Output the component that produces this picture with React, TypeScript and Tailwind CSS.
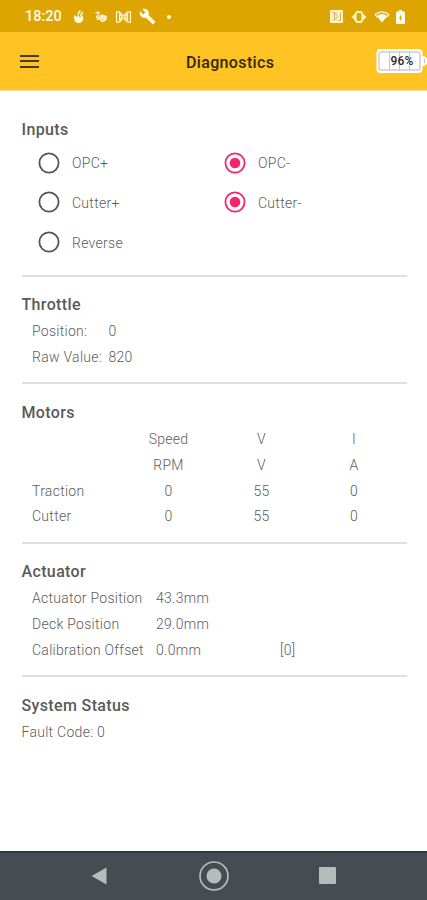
import React from "react";

function Heading({ children, className = "" }: { children: React.ReactNode; className?: string }) {
  return <h2 className={`h-[26px] text-[16px] leading-[26px] font-medium tracking-[0.36px] text-[#5a5a5a] ${className}`}>{children}</h2>;
}

function Divider({ className = "" }: { className?: string }) {
  return <div className={`h-[2px] shrink-0 bg-[#e0e0e0] ${className}`} />;
}

function Radio({ label, on = false }: { label: string; on?: boolean }) {
  return (
    <div className="flex h-[39.6px] items-center">
      <svg width="22" height="22" viewBox="0 0 22 22" fill="none">
        <circle cx="11" cy="11" r="9.6" stroke={on ? "#f5256c" : "#555555"} strokeWidth="1.8" />
        {on && <circle cx="11" cy="11" r="5.3" fill="#f5256c" />}
      </svg>
      <span className="ml-[12px] pt-[2px]">{label}</span>
    </div>
  );
}

const motors = [
  ["", "Speed", "V", "I"],
  ["", "RPM", "V", "A"],
  ["Traction", "0", "55", "0"],
  ["Cutter", "0", "55", "0"],
];

const actuator = [
  ["Actuator Position", "43.3mm", ""],
  ["Deck Position", "29.0mm", ""],
  ["Calibration Offset", "0.0mm", "[0]"],
];

export default function App() {
  return (
    <div className="flex h-[900px] w-[427px] flex-col overflow-hidden bg-white font-['Roboto',sans-serif] text-[14px] font-light tracking-[0.28px] text-[#5c5c5c]">
      <div className="flex h-[32px] shrink-0 items-center bg-[#dea500] pt-[1px] pl-[25px] text-white">
        <span className="w-[37px] pt-[1px] text-[14.5px] font-medium tracking-[0px] text-[#fffbe9]">18:20</span>
        <svg className="ml-[11px]" width="12" height="14" viewBox="0 0 12 14" fill="#fff8df">
          <path d="M1.200 5C0 9.500 2.200 13 5.700 13s5.300-3 4.300-6.500L8.800 4.800 7 7.500 5 4.500 4.400 7Z" />
          <path d="m5 4 2-3M7.800 5l1.600-2.500" stroke="#fff8df" strokeWidth="1.500" strokeLinecap="round" />
        </svg>
        <svg className="ml-[9px]" width="14" height="14" viewBox="0 0 14 14" fill="none" stroke="#fff8df" strokeWidth="1.4" strokeLinecap="round" strokeLinejoin="round">
          <path d="M2 3.2q3-2 3 0T2.500 6.500q0 2 2.500.5L8 5.200M3.500 9.500q2.200-2.500 3 0 .7 2.500 3 1.500Q12.500 10 12.200 6.500L8 5.200l-1 3.500" />
          <circle cx="9.300" cy="8" r="1.300" />
        </svg>
        <svg className="ml-[7px]" width="17" height="14" viewBox="0 0 17 14" fill="none" stroke="#fff8df" strokeWidth="1.2">
          <path d="M4.500 1.800H1.500v10.400h3M12.500 1.800h3v10.400h-3M4.500 4v6l2.700-3ZM12.500 4v6L9.800 7ZM4.500 1.800 8.500 6l4-4.200M4.500 12.200l4-4.200 4 4.200" />
        </svg>
        <svg className="ml-[7px]" width="17" height="17" viewBox="0 0 24 24" fill="#fffbe9">
          <path d="m22.7 19-9.1-9.1c.9-2.3.4-5-1.5-6.9-2-2-5-2.4-7.4-1.3L9 6 6 9 1.6 4.7C.4 7.1.9 10.1 2.9 12.1c1.9 1.9 4.6 2.4 6.9 1.5l9.1 9.1c.4.4 1 .4 1.400 0l2.300-2.300c.5-.4.5-1.100.1-1.400Z" />
        </svg>
        <span className="ml-[11px] size-[4px] rounded-full bg-[#fffbe9]" />
        <svg className="ml-[159px]" width="13" height="13" viewBox="0 0 13 13">
          <rect width="13" height="13" rx="1" fill="#fff3cc" />
          <path d="M2.500 2.500h2v7l-2 1M6 2.500v2l2 2-2 2v2M10.500 2.500v8h-2" fill="none" stroke="#d4ab42" strokeWidth="1" />
        </svg>
        <svg className="ml-[8px]" width="16" height="14" viewBox="0 0 16 14" fill="none" stroke="#fff3cc">
          <path d="M6 2h4l1.500 2v6L10 12H6l-1.500-2V4Z" strokeWidth="2" strokeLinejoin="round" />
          <path d="M4.500 3.200.5 7l4 3.800ZM11.500 3.200l4 3.800-4 3.800Z" fill="#fff3cc" stroke="none" />
        </svg>
        <svg className="ml-[7px]" width="16" height="13" viewBox="0 0 16 13" fill="#fffbe9">
          <path d="M8 12.500 3.200 6.700Q8 3.400 12.800 6.700Z" />
          <path d="M1.200 4.600Q8-1 14.800 4.600l-1.800 2.200Q8 2.500 3 6.800Z" fill="none" stroke="#fffbe9" strokeWidth="1.3" />
        </svg>
        <svg className="ml-[6px]" width="9" height="14" viewBox="0 0 9 14">
          <path d="M3 0h3v1.500h2q1 0 1 1V13q0 1-1 1H1q-1 0-1-1V2.500q0-1 1-1h2Z" fill="#fffbe9" />
          <path d="M4.500 5.500v5M3 8h3" stroke="#dea500" />
        </svg>
      </div>

      <header className="flex h-[59px] shrink-0 items-center border-b border-[#eddca8] bg-[#ffc424]">
        <div className="ml-[20px] flex w-[19px] flex-col gap-[3.5px]">
          <span className="h-[2px] bg-[#493d17]" />
          <span className="h-[2px] bg-[#493d17]" />
          <span className="h-[2px] bg-[#493d17]" />
        </div>
        <h1 className="ml-[147px] w-[90px] pt-[3px] text-[16px] font-medium tracking-[0.35px] whitespace-nowrap text-[#332800]">Diagnostics</h1>
        <svg className="ml-[100px]" width="51" height="26" viewBox="0 0 51 26" fill="none">
          <rect x="0.500" y="1" width="46" height="24" rx="4" fill="white" />
          <path d="M46 8q4 0 5 3v4q-1 3-5 3" fill="white" />
          <rect x="3" y="4" width="41" height="18" rx="2" stroke="#b4b4b4" />
          <path d="M13.500 4v18M23.500 4v18M33.500 4v18M48.500 11v4" stroke="#c4c4c4" />
          <text x="26" y="17" textAnchor="middle" fill="#292929" fontSize="12" fontWeight="500" letterSpacing="0.2">96%</text>
        </svg>
      </header>

      <main className="flex h-[760px] shrink-0 flex-col pt-[26px] pr-[20px] pl-[21.500px]">
        <Heading>Inputs</Heading>
        <div className="grid h-[119px] grid-cols-[186px_1fr] pl-[16.500px]">
          <Radio label="OPC+" />
          <Radio label="OPC-" on />
          <Radio label="Cutter+" />
          <Radio label="Cutter-" on />
          <Radio label="Reverse" />
        </div>
        <Divider className="mt-[13px]" />

        <Heading className="mt-[15px]">Throttle</Heading>
        <div className="mt-[1px] grid grid-cols-[76.500px_1fr] pl-[10.500px] leading-[25.700px]">
          <span>Position:</span><span>0</span>
          <span>Raw Value:</span><span>820</span>
        </div>
        <Divider className="mt-[12px]" />

        <Heading className="mt-[16px]">Motors</Heading>
        <div className="mt-[1px] pl-[10.500px]">
          {motors.map((row, i) => (
            <div key={i} className="grid h-[25.700px] grid-cols-[90px_93px_93px_92px] leading-[25.700px]">
              {row.map((cell, j) => <span key={j} className={j ? "text-center" : ""}>{cell}</span>)}
            </div>
          ))}
        </div>
        <Divider className="mt-[12px]" />

        <Heading className="mt-[15px]">Actuator</Heading>
        <div className="mt-[1px] pl-[10.500px]">
          {actuator.map((row) => (
            <div key={row[0]} className="grid h-[25.700px] grid-cols-[124px_124px_1fr] leading-[25.700px] whitespace-nowrap">
              {row.map((cell, j) => <span key={j}>{cell}</span>)}
            </div>
          ))}
        </div>
        <Divider className="mt-[12px]" />

        <Heading className="mt-[16px]">System Status</Heading>
        <p className="mt-[0.500px] leading-[25.700px]">Fault Code: 0</p>
      </main>

      <nav className="flex h-[49px] shrink-0 items-center border-t-2 border-[#263a43] bg-[#454c52] pb-[2px] pl-[91px]">
        <svg width="16" height="18" viewBox="0 0 16 18" fill="#b4bcbc"><path d="M.500 9 15.500.500v17Z" /></svg>
        <svg className="ml-[92px]" width="30" height="30" viewBox="0 0 30 30">
          <circle cx="15" cy="15" r="14" fill="none" stroke="#b4bcbc" strokeWidth="1.700" />
          <circle cx="15" cy="15" r="7.500" fill="#b4bcbc" />
        </svg>
        <span className="ml-[90px] size-[17px] rounded-[1px] bg-[#b4bcbc]" />
      </nav>
    </div>
  );
}
